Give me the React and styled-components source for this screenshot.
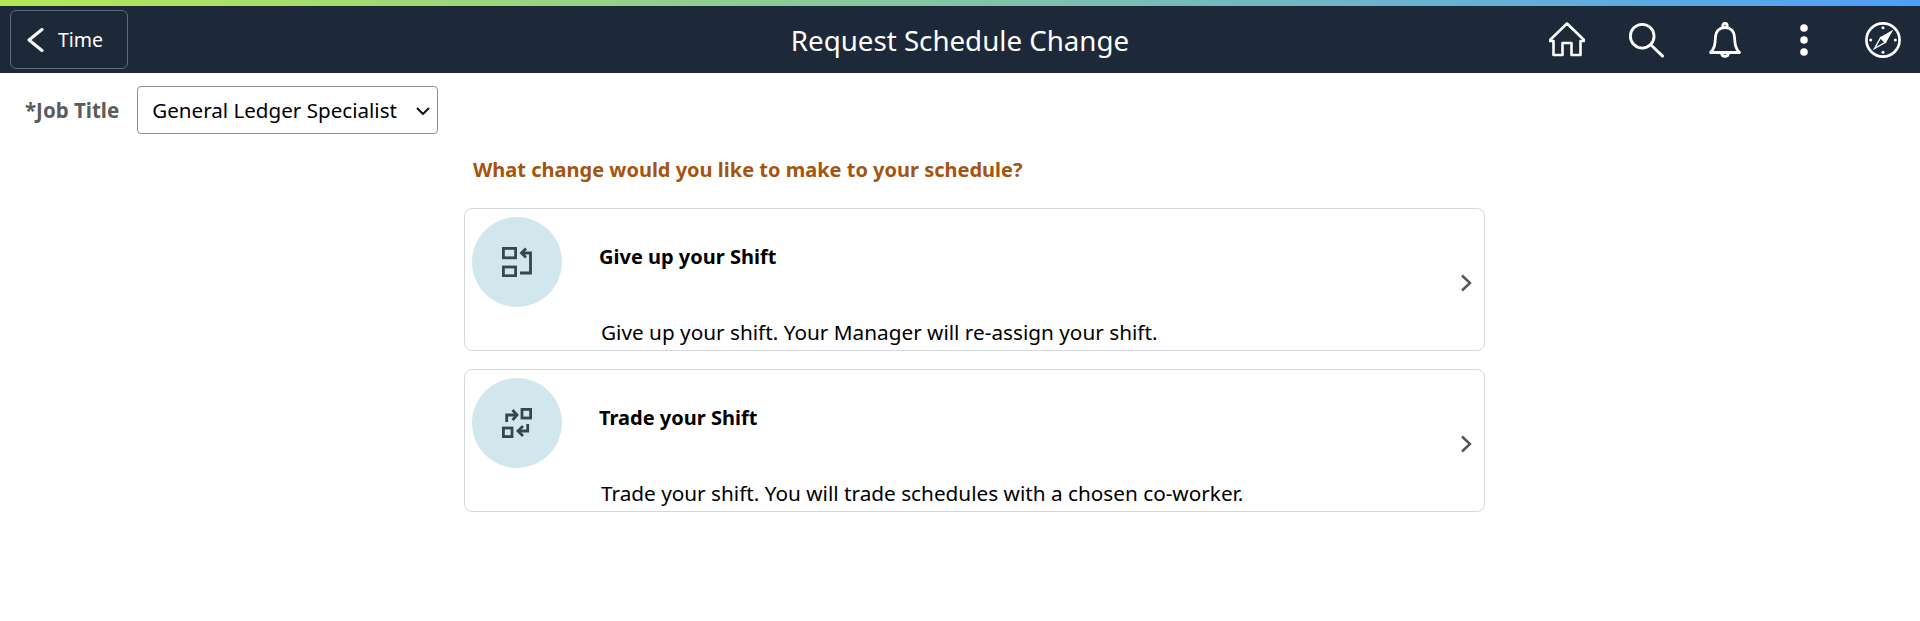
import styled, { createGlobalStyle } from "styled-components";

const options = [
  {
    title: "Give up your Shift",
    desc: "Give up your shift. Your Manager will re-assign your shift.",
    icon: (
      <svg width="30" height="30" viewBox="0 0 30 30" fill="none" stroke="#36454f" strokeWidth="2.800">
        <rect x="1.400" y="1.400" width="12.200" height="9.400" />
        <rect x="1.400" y="20" width="12.200" height="8.800" />
        <path d="M18 26H28.500V6H20" />
        <path d="M24 1.500L19.500 6L24 10.500" />
      </svg>
    ),
  },
  {
    title: "Trade your Shift",
    desc: "Trade your shift. You will trade schedules with a chosen co-worker.",
    icon: (
      <svg width="30" height="30" viewBox="0 0 30 30" fill="none" stroke="#36454f" strokeWidth="2.800">
        <rect x="20" y="1.400" width="8.600" height="8.600" />
        <rect x="1.400" y="20" width="8.600" height="8.600" />
        <path d="M4.700 14V7H15" />
        <path d="M10.500 2L15 7L10.500 12" />
        <path d="M25.700 16V23H16" />
        <path d="M21 18L16 23L21 28" />
      </svg>
    ),
  },
];

const App = () => {
  return (
    <Page>
      <GlobalStyle />
      <AccentBar />
      <Header>
        <BackButton>
          <svg width="20" height="24" viewBox="0 0 20 24" fill="none" stroke="#fff" strokeWidth="3" strokeLinecap="round" strokeLinejoin="round">
            <path d="M16 1.500L3 12L16 22.500" />
          </svg>
          <span>Time</span>
        </BackButton>
        <PageTitle>Request Schedule Change</PageTitle>
        <HeaderIcons>
          <IconSlot>
            <svg width="36" height="36" viewBox="0 0 36 36" fill="none" stroke="#fff" strokeWidth="2.600" strokeLinejoin="round">
              <path d="M1 18L18 1.500L35 18V19H31.500V33H22.500V21H13.500V33H4.500V19H1Z" />
            </svg>
          </IconSlot>
          <IconSlot>
            <svg width="38" height="36" viewBox="0 0 38 36" fill="none" stroke="#fff" strokeWidth="3" strokeLinecap="round">
              <circle cx="15" cy="14" r="12.500" />
              <path d="M24 23L36.500 35" />
            </svg>
          </IconSlot>
          <IconSlot>
            <svg width="32" height="36" viewBox="0 0 32 36" fill="none" stroke="#fff" strokeWidth="2.800" strokeLinejoin="round">
              <circle cx="16" cy="3.500" r="2.200" />
              <path d="M1.500 30.500C6 26 6 22 6.500 15C7 8.500 11 5.500 16 5.500C21 5.500 25 8.500 25.500 15C26 22 26 26 30.500 30.500Z" />
              <path d="M12.500 31C13 35.500 19 35.500 19.500 31" />
            </svg>
          </IconSlot>
          <IconSlot>
            <svg width="36" height="36" viewBox="0 0 36 36" fill="#fff">
              <circle cx="18" cy="6" r="3.800" />
              <circle cx="18" cy="18" r="3.800" />
              <circle cx="18" cy="30" r="3.800" />
            </svg>
          </IconSlot>
          <IconSlot>
            <svg width="38" height="38" viewBox="0 0 38 38" fill="none" stroke="#fff" strokeWidth="2.800">
              <circle cx="19" cy="19" r="17.500" />
              <path d="M28 10L21.500 21.500L16.500 16.500Z" strokeWidth="1.400" fill="#fff" />
              <path d="M10 28L16.500 16.500L21.500 21.500Z" strokeWidth="1.400" />
              <g fill="#fff" stroke="none">
                <circle cx="19" cy="6" r="1.600" />
                <circle cx="19" cy="32" r="1.600" />
                <circle cx="6" cy="19" r="1.600" />
                <circle cx="32" cy="19" r="1.600" />
              </g>
            </svg>
          </IconSlot>
        </HeaderIcons>
      </Header>
      <JobRow>
        <JobLabel htmlFor="job">*Job Title</JobLabel>
        <SelectWrap>
          <JobSelect id="job" defaultValue="General Ledger Specialist">
            <option>General Ledger Specialist</option>
          </JobSelect>
          <SelectArrow width="14" height="8" viewBox="0 0 14 8" fill="none" stroke="#111" strokeWidth="2">
            <path d="M1 1L7 7L13 1" />
          </SelectArrow>
        </SelectWrap>
      </JobRow>
      <Content>
        <Question>What change would you like to make to your schedule?</Question>
        <CardList>
          {options.map((option, optionIndex) => {
            return (
              <Card key={optionIndex}>
                <IconCircle>{option.icon}</IconCircle>
                <CardText>
                  <CardTitle>{option.title}</CardTitle>
                  <CardDesc>{option.desc}</CardDesc>
                </CardText>
                <Chevron width="12" height="18" viewBox="0 0 12 18" fill="none" stroke="#555" strokeWidth="2.400">
                  <path d="M2 1.500L10 9L2 16.500" />
                </Chevron>
              </Card>
            );
          })}
        </CardList>
      </Content>
    </Page>
  );
};

const GlobalStyle = createGlobalStyle`
  body {
    margin: 0;
    background: #fff;
    font-family: "Noto Sans", "Open Sans", sans-serif;
  }
`;

const Page = styled.div`
  height: 621px;
  overflow: hidden;
`;

const AccentBar = styled.div`
  height: 6px;
  background: linear-gradient(90deg, #b5e853 0%, #4f9ffb 100%);
`;

const Header = styled.header`
  height: 67px;
  background: #1d2939;
  display: grid;
  grid-template-columns: 1fr auto 1fr;
  align-items: center;
  padding: 0 10px;
  color: #fff;
`;

const BackButton = styled.button`
  justify-self: start;
  width: 118px;
  height: 59px;
  padding: 0 0 0 15px;
  display: flex;
  align-items: center;
  gap: 12px;
  background: transparent;
  border: 1px solid #5f6b78;
  border-radius: 6px;
  color: #fff;
  font-family: inherit;
  font-size: 19.500px;
`;

const PageTitle = styled.h1`
  margin: 0;
  font-size: 27.700px;
  font-weight: 400;
`;

const HeaderIcons = styled.div`
  justify-self: end;
  display: flex;
  align-items: center;
  gap: 43px;
  margin-right: 9px;
`;

const IconSlot = styled.div`
  width: 36px;
  display: flex;
  justify-content: center;
`;

const JobRow = styled.div`
  display: flex;
  align-items: center;
  gap: 18px;
  padding: 13px 0 0 25px;
`;

const JobLabel = styled.label`
  color: #5b5b5b;
  font-size: 20.500px;
  font-weight: 700;
`;

const SelectWrap = styled.div`
  position: relative;
  display: flex;
`;

const JobSelect = styled.select`
  appearance: none;
  width: 301px;
  height: 48px;
  padding: 0 14px;
  background: #fff;
  border: 1px solid #8a9099;
  border-radius: 4px;
  color: #000;
  font-family: inherit;
  font-size: 20.600px;
`;

const SelectArrow = styled.svg`
  position: absolute;
  top: 21px;
  right: 8px;
  pointer-events: none;
`;

const Content = styled.main`
  width: 1021px;
  margin-left: 464px;
  padding-top: 22px;
`;

const Question = styled.h2`
  margin: 0 0 25px 9px;
  color: #a5540f;
  font-size: 20px;
  font-weight: 700;
`;

const CardList = styled.div`
  display: flex;
  flex-direction: column;
  gap: 18px;
`;

const Card = styled.div`
  height: 143px;
  box-sizing: border-box;
  padding: 8px 12px 0 7px;
  display: flex;
  align-items: flex-start;
  border: 1px solid #d5d8de;
  border-radius: 8px;
`;

const IconCircle = styled.div`
  flex: none;
  width: 90px;
  height: 90px;
  display: flex;
  align-items: center;
  justify-content: center;
  border-radius: 50%;
  background: #d2e6ee;
`;

const CardText = styled.div`
  flex: 1;
  padding: 27px 0 0 37px;
`;

const CardTitle = styled.div`
  color: #000;
  font-size: 20px;
  font-weight: 700;
  line-height: 26px;
`;

const CardDesc = styled.div`
  margin: 48px 0 0 2px;
  color: #000;
  font-size: 20.750px;
  line-height: 28px;
`;

const Chevron = styled.svg`
  flex: none;
  margin-top: 57px;
`;

export default App;
